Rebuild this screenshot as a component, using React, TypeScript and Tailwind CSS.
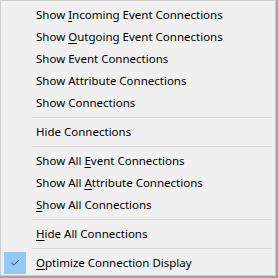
import { Check } from "lucide-react";

type Item = { type: "item"; label: string; key?: number; checked?: boolean } | { type: "sep" };

const items: Item[] = [
  { type: "item", label: "Show Incoming Event Connections", key: 5 },
  { type: "item", label: "Show Outgoing Event Connections", key: 5 },
  { type: "item", label: "Show Event Connections" },
  { type: "item", label: "Show Attribute Connections" },
  { type: "item", label: "Show Connections" },
  { type: "sep" },
  { type: "item", label: "Hide Connections" },
  { type: "sep" },
  { type: "item", label: "Show All Event Connections", key: 9 },
  { type: "item", label: "Show All Attribute Connections", key: 9 },
  { type: "item", label: "Show All Connections", key: 0 },
  { type: "sep" },
  { type: "item", label: "Hide All Connections", key: 0 },
  { type: "sep" },
  { type: "item", label: "Optimize Connection Display", key: 0, checked: true },
];

function Label({ label, k }: { label: string; k?: number }) {
  if (k === undefined) return <span>{label}</span>;
  return (
    <span>
      {label.slice(0, k)}
      <span className="underline underline-offset-2">{label[k]}</span>
      {label.slice(k + 1)}
    </span>
  );
}

export default function App() {
  return (
    <div className="h-[278px] w-[278px] bg-[#a3a3a3]">
      <div
        className="flex h-[276px] w-[276px] flex-col border border-[#cccccc] bg-[#f0f0f0] pt-[3px] text-[11.5px] text-black"
        style={{ fontFamily: '"Segoe UI", "Noto Sans", sans-serif' }}
      >
        {items.map((it, i) =>
          it.type === "sep" ? (
            <div key={i} className="flex h-[7px] items-center pl-[31px] pr-[3px]">
              <div className="h-px w-full bg-[#d7d7d7]" />
            </div>
          ) : (
            <div key={i} className="flex h-[22px] items-center">
              <div className="flex w-[35px] justify-start pl-[3px]">
                {it.checked && (
                  <div className="flex h-[22px] w-[22px] items-center justify-center bg-[#91c9f7]">
                    <Check className="h-[10px] w-[10px] text-[#333]" strokeWidth={2.25} />
                  </div>
                )}
              </div>
              <Label label={it.label} k={it.key} />
            </div>
          )
        )}
      </div>
    </div>
  );
}
